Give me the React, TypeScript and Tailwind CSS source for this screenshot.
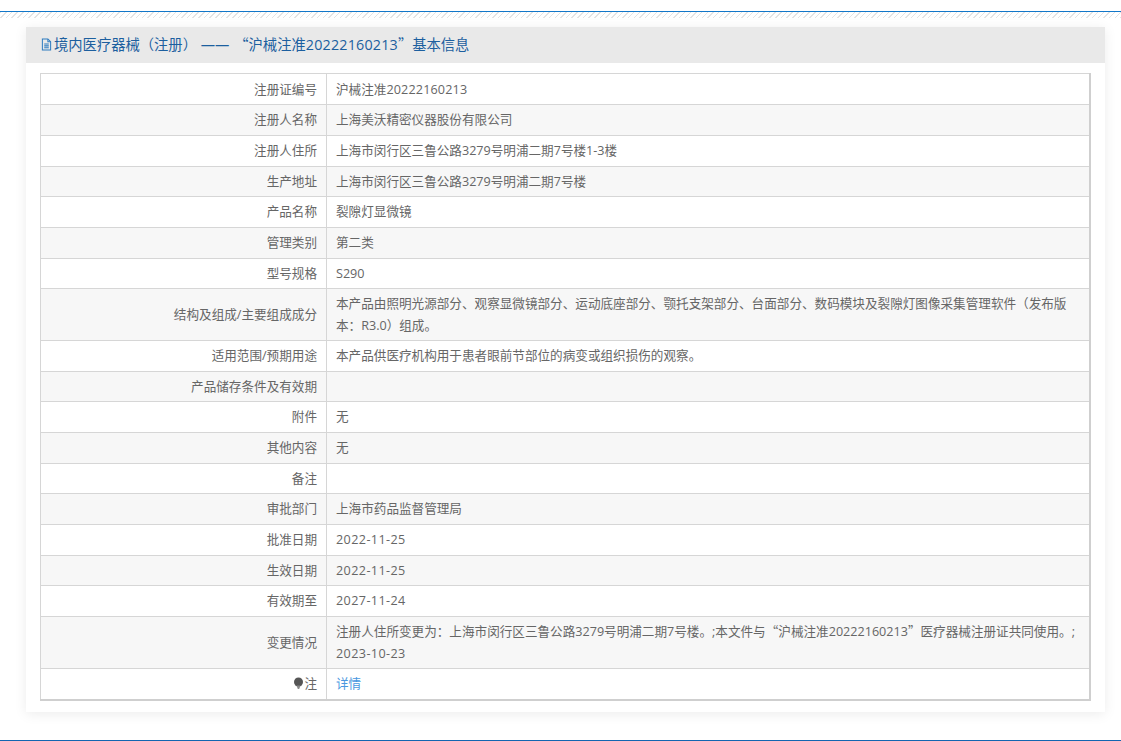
import React from 'react';

const font = "font-['Open_Sans','Noto_Sans_CJK_SC',sans-serif]";

// quotes are full width in the original, so the CJK face has to win for them
function Cjk({ children }: { children: React.ReactNode }) {
  return <span className="font-['Noto_Sans_CJK_SC',sans-serif] leading-none">{children}</span>;
}

const rows: { label: string; value: React.ReactNode; date?: boolean; wrap?: boolean }[] = [
  { label: '注册证编号', value: <>沪械注准<span className="tracking-[0.15px]">20222160213</span></> },
  { label: '注册人名称', value: '上海美沃精密仪器股份有限公司' },
  { label: '注册人住所', value: '上海市闵行区三鲁公路3279号明浦二期7号楼1-3楼' },
  { label: '生产地址', value: '上海市闵行区三鲁公路3279号明浦二期7号楼' },
  { label: '产品名称', value: '裂隙灯显微镜' },
  { label: '管理类别', value: '第二类' },
  { label: '型号规格', value: 'S290' },
  {
    label: '结构及组成/主要组成成分',
    wrap: true,
    value: '本产品由照明光源部分、观察显微镜部分、运动底座部分、颚托支架部分、台面部分、数码模块及裂隙灯图像采集管理软件（发布版本：R3.0）组成。',
  },
  { label: '适用范围/预期用途', value: '本产品供医疗机构用于患者眼前节部位的病变或组织损伤的观察。' },
  { label: '产品储存条件及有效期', value: '' },
  { label: '附件', value: '无' },
  { label: '其他内容', value: '无' },
  { label: '备注', value: '' },
  { label: '审批部门', value: '上海市药品监督管理局' },
  { label: '批准日期', value: '2022-11-25', date: true },
  { label: '生效日期', value: '2022-11-25', date: true },
  { label: '有效期至', value: '2027-11-24', date: true },
  {
    label: '变更情况',
    wrap: true,
    value: (
      <>
        注册人住所变更为：上海市闵行区三鲁公路3279号明浦二期7号楼。;本文件与<Cjk>“</Cjk>沪械注准20222160213<Cjk>”</Cjk>医疗器械注册证共同使用。;{' '}
        <span className="tracking-[0.4px]">2023-10-23</span>
      </>
    ),
  },
];

function FileIcon() {
  return (
    <svg width="11" height="13" viewBox="0 0 12 14" fill="none" stroke="#2f7cc0" strokeWidth="1.1" className="shrink-0">
      <path d="M1.5 1h6l3 3v9h-9z" />
      <path d="M7.5 1v3h3M3.5 6.5h5M3.5 8.5h5M3.5 10.5h5" />
    </svg>
  );
}

function BulbIcon() {
  return (
    <svg width="11" height="13" viewBox="0 0 11 13" className="inline-block align-[-2px]">
      <circle cx="5.5" cy="5" r="4.5" fill="#555" />
      <path d="M3.5 8.5h4L6.2 12h-1.4z" fill="#888" />
    </svg>
  );
}

export default function App() {
  return (
    <div className={`${font} w-[1121px] h-[741px] bg-white overflow-hidden flex flex-col text-[12.6px] leading-[21.67px] text-[#666]`}>
      <div className="mt-[11px] h-px bg-[#1277c9] shrink-0" />
      <div className="h-[6px] bg-[repeating-linear-gradient(135deg,#e4e4e4_0,#e4e4e4_1px,#ffffff_1px,#ffffff_4px)] shrink-0" />

      <div className="mt-[9px] mx-[26px] w-[1079px] h-[685px] bg-white shadow-[0_2px_12px_rgba(0,0,0,0.08)] shrink-0">
        <div className="h-9 bg-[#e9e9e9] pl-[15px] pb-px flex items-center gap-[2px] text-[14.3px] text-[#1c5f9f]">
          <FileIcon />
          <span>
            境内医疗器械（注册） <span className="mr-[5px]">——</span><Cjk>“</Cjk>
            沪械注准<span className="tracking-[0.2px]">20222160213</span>
            <Cjk>”</Cjk>基本信息
          </span>
        </div>

        <div className="pt-2.5 px-[14px]">
          <table className="w-[1051px] table-fixed border-collapse border-2 border-t border-l border-[#cfcfcf]">
            <colgroup>
              <col className="w-[286px]" />
              <col />
            </colgroup>
            <tbody>
              {rows.map((row, i) => {
                // the row heights of the original fall on thirds of a pixel
                const pad = `${i === 0 ? 'pt-[4.5px]' : 'pt-1'} ${row.wrap ? 'pb-[3.5px]' : 'pb-1'}`;
                return (
                  <tr key={row.label} className={i % 2 === 1 ? 'bg-[#f7f7f7]' : 'bg-white'}>
                    <td className={`border border-[#d6d6d6] ${pad} pr-[9px] text-right`}>{row.label}</td>
                    <td className={`border border-[#d6d6d6] ${pad} pl-[9px] pr-[10px] ${row.date ? 'tracking-[0.4px]' : ''}`}>
                      {row.value}
                    </td>
                  </tr>
                );
              })}
              <tr className="bg-white">
                <td className="border border-[#d6d6d6] py-1 pr-[9px] text-right">
                  <BulbIcon />注
                </td>
                <td className="border border-[#d6d6d6] py-1 pl-[9px] text-[#4a98e0]">详情</td>
              </tr>
            </tbody>
          </table>
        </div>
      </div>

      <div className="mt-[28px] border-t-2 border-[#1366b1] shrink-0" />
    </div>
  );
}
